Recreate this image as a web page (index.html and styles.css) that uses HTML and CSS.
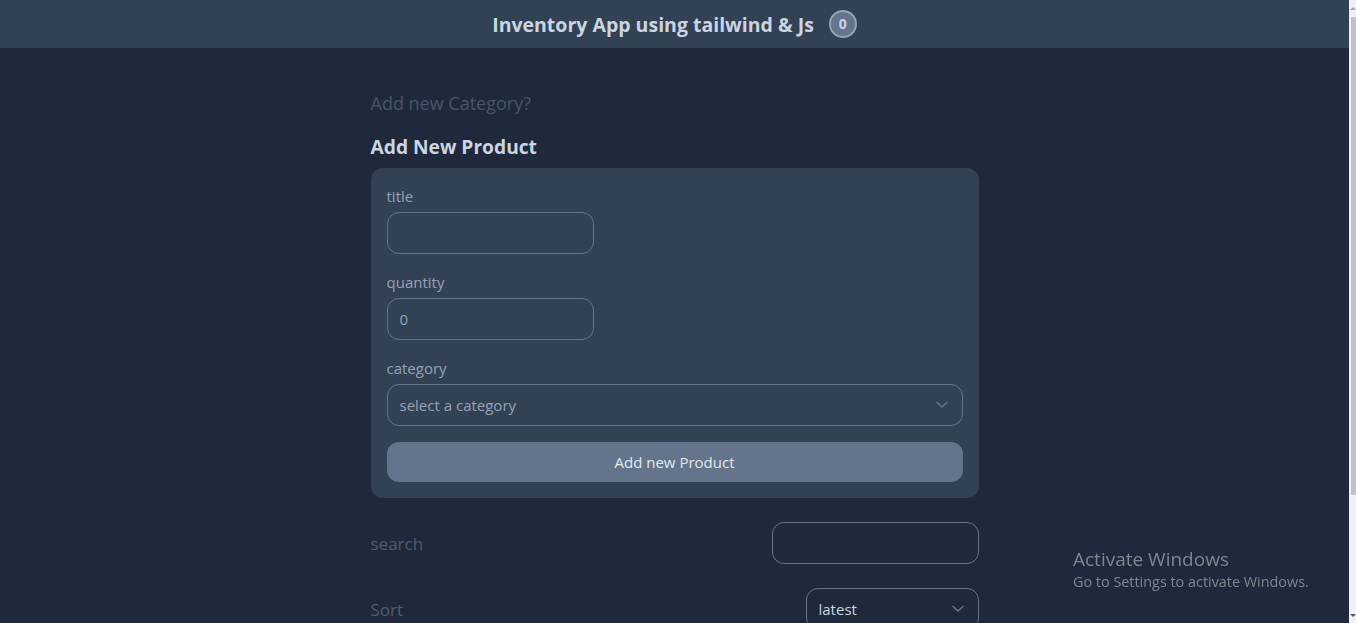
FILE: index.html
```html
<!DOCTYPE html>
<html lang="en">
<head>
<meta charset="utf-8">
<title>Inventory App</title>
<link rel="stylesheet" href="styles.css">
</head>
<body>
<div class="page">
  <header class="topbar">
    <h1 class="title">Inventory App using tailwind &amp; Js</h1>
    <span class="badge">0</span>
  </header>
  <main class="container">
    <p class="cat-toggle">Add new Category?</p>
    <section class="product-section">
      <h2 class="section-title">Add New Product</h2>
      <form class="card">
        <div class="field">
          <label class="label" for="title">title</label>
          <input class="input input-sm" id="title" type="text">
        </div>
        <div class="field">
          <label class="label" for="qty">quantity</label>
          <input class="input input-sm" id="qty" type="number" value="0">
        </div>
        <div class="field">
          <label class="label" for="cat">category</label>
          <div class="select-wrap">
            <select class="input select" id="cat"><option>select a category</option></select>
            <svg class="chevron" width="12" height="8" viewBox="0 0 12 8"><path d="M1 1.5 L6 6 L11 1.5" fill="none" stroke="#64748b" stroke-width="1.6" stroke-linecap="round" stroke-linejoin="round"/></svg>
          </div>
        </div>
        <button class="btn" type="button">Add new Product</button>
      </form>
    </section>
    <div class="filter-row">
      <label class="filter-label" for="search">search</label>
      <input class="input input-sm" id="search" type="text">
    </div>
    <div class="filter-row">
      <label class="filter-label" for="sort">Sort</label>
      <div class="select-wrap sort-wrap">
        <select class="input select sort-select" id="sort"><option>latest</option></select>
        <svg class="chevron" width="12" height="8" viewBox="0 0 12 8"><path d="M1 1.5 L6 6 L11 1.5" fill="none" stroke="#64748b" stroke-width="1.6" stroke-linecap="round" stroke-linejoin="round"/></svg>
      </div>
    </div>
  </main>
</div>
<div class="scrollbar">
  <span class="arrow arrow-up"></span>
  <div class="thumb"></div>
  <span class="arrow arrow-down"></span>
</div>
<div class="watermark">
  <div class="wm-title">Activate Windows</div>
  <div class="wm-sub">Go to Settings to activate Windows.</div>
</div>
</body>
</html>
```

FILE: styles.css
```css
* { box-sizing: border-box; }

html, body {
  margin: 0;
  height: 100%;
  overflow: hidden;
}

body {
  display: flex;
  background: #1e293b;
  font-family: "Open Sans", "Noto Sans", sans-serif;
  font-size: 16px;
  line-height: 24px;
  color: #94a3b8;
}

.page {
  flex: 1;
  min-width: 0;
  height: 100%;
  overflow: hidden;
}

.topbar {
  height: 48px;
  background: #334155;
  display: flex;
  align-items: center;
  justify-content: center;
  gap: 15px;
}

.title {
  margin: 0;
  font-size: 19.5px;
  font-weight: 700;
  line-height: 28px;
  color: #cbd5e1;
  padding-top: 1px;
}

.badge {
  width: 28px;
  height: 28px;
  border-radius: 50%;
  border: 2px solid #94a3b8;
  background: #64748b;
  color: #cbd5e1;
  font-size: 14px;
  font-weight: 700;
  display: flex;
  align-items: center;
  justify-content: center;
  line-height: 1;
}

.container {
  width: 608px;
  margin: 0 auto;
  padding-top: 41px;
}

.cat-toggle {
  margin: 0 0 16px;
  font-size: 18px;
  line-height: 28px;
  color: #475569;
}

.section-title {
  margin: 0 0 7px;
  font-size: 19.2px;
  line-height: 28px;
  font-weight: 700;
  color: #cbd5e1;
}

.card {
  background: #334155;
  border-radius: 12px;
  padding: 16px;
  margin: 0 0 24px;
}

.field {
  margin-bottom: 16px;
}

.label {
  display: block;
  margin-bottom: 4px;
  font-size: 15px;
  line-height: 24px;
  color: #94a3b8;
}

.input {
  display: block;
  height: 42px;
  border: 1px solid #64748b;
  border-radius: 12px;
  background: transparent;
  padding: 0 12px;
  font-family: inherit;
  font-size: 15px;
  color: #94a3b8;
  outline: none;
  -moz-appearance: textfield;
}

.input::-webkit-outer-spin-button,
.input::-webkit-inner-spin-button {
  -webkit-appearance: none;
  margin: 0;
}

.input-sm {
  width: 207px;
}

.select-wrap {
  position: relative;
}

.select {
  width: 100%;
  appearance: none;
  -webkit-appearance: none;
}

.chevron {
  position: absolute;
  right: 15px;
  top: 17px;
  pointer-events: none;
}

.btn {
  display: block;
  width: 100%;
  height: 40px;
  border: none;
  border-radius: 12px;
  background: #64748b;
  color: #e2e8f0;
  font-family: inherit;
  font-size: 15px;
}

.filter-row {
  display: flex;
  align-items: center;
  justify-content: space-between;
  margin-bottom: 24px;
}

.filter-label {
  font-size: 17px;
  line-height: 26px;
  color: #4f5d73;
  padding-top: 1px;
}

.sort-wrap {
  width: 173px;
}

.sort-select {
  color: #cbd5e1;
}

.scrollbar {
  width: 7px;
  height: 100%;
  background: #f1f1f1;
  display: flex;
  flex-direction: column;
  align-items: flex-end;
  padding: 7px 0 6px;
}

.arrow {
  width: 0;
  height: 0;
  border-left: 3px solid transparent;
  border-right: 3px solid transparent;
}

.arrow-up {
  border-bottom: 3px solid #a3a3a3;
}

.arrow-down {
  margin-top: auto;
  border-top: 3px solid #505050;
}

.thumb {
  width: 5px;
  height: 478px;
  margin-top: 7px;
  background: #c1c1c1;
}

.watermark {
  position: fixed;
  left: 1073px;
  top: 546px;
  color: #7f8690;
  font-family: "Open Sans", "Noto Sans", sans-serif;
  pointer-events: none;
}

.wm-title {
  font-size: 19px;
  line-height: 26px;
}

.wm-sub {
  font-size: 14.4px;
  line-height: 20px;
}
```
